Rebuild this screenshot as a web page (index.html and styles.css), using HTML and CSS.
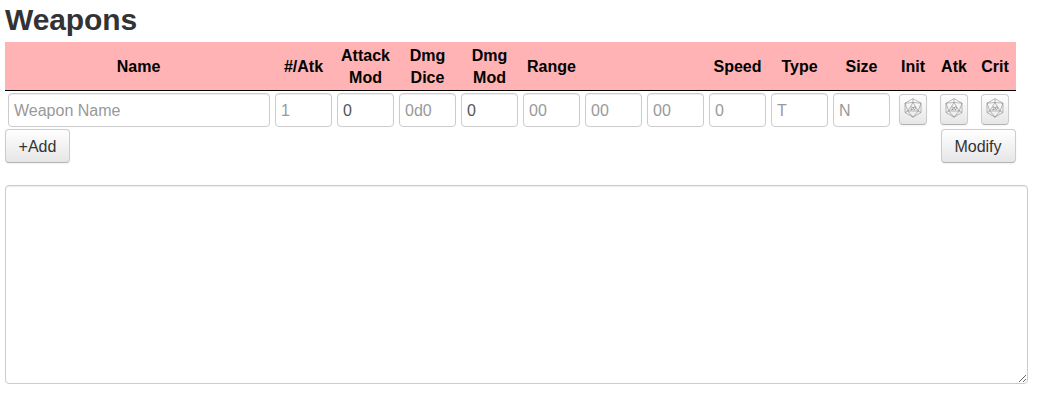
FILE: index.html
```html
<!DOCTYPE html>
<html lang="en">
<head>
<meta charset="utf-8">
<title>Weapons</title>
<link rel="stylesheet" href="styles.css">
</head>
<body>
<svg class="sprite" aria-hidden="true">
  <symbol id="d20" viewBox="0 0 18 20">
    <path d="M9 .7 17 5.200v9.300L9 19.200 1 14.500V5.200zM9 .7v3.800M1 5.200l8-.7 8 .7M9 4.500 3.800 13h10.400zM1 5.200 3.800 13 1 14.500M17 5.200 14.200 13l2.800 1.500M3.800 13 9 19.200l5.200-6.200"/>
    <path class="pips" d="M6.700 9.600c.4-1.200 2-.8 1.800.2-.1.700-1.200 1-1.900 1.800h2"/>
    <ellipse class="pips" cx="10.400" cy="10.200" rx="1" ry="1.400"/>
  </symbol>
</svg>
<main class="weapons">
  <h2 class="title">Weapons</h2>
  <div class="row head">
    <span>Name</span><span>#/Atk</span><span>Attack Mod</span><span>Dmg Dice</span><span>Dmg Mod</span><span>Range</span><span></span><span></span><span>Speed</span><span>Type</span><span>Size</span><span>Init</span><span>Atk</span><span>Crit</span>
  </div>
  <div class="row fields">
    <input class="field name" placeholder="Weapon Name">
    <input class="field" placeholder="1">
    <input class="field" value="0">
    <input class="field" placeholder="0d0">
    <input class="field" value="0">
    <input class="field" placeholder="00">
    <input class="field" placeholder="00">
    <input class="field" placeholder="00">
    <input class="field" placeholder="0">
    <input class="field" placeholder="T">
    <input class="field" placeholder="N">
    <button class="btn roll" aria-label="Roll initiative"><svg class="die"><use href="#d20"/></svg></button>
    <button class="btn roll" aria-label="Roll attack"><svg class="die"><use href="#d20"/></svg></button>
    <button class="btn roll" aria-label="Roll critical"><svg class="die"><use href="#d20"/></svg></button>
  </div>
  <div class="actions">
    <button class="btn add">+Add</button>
    <button class="btn modify">Modify</button>
  </div>
  <textarea class="notes"></textarea>
</main>
</body>
</html>
```
FILE: styles.css
```css
* { box-sizing: border-box; }
body {
  margin: 0;
  background: #fff;
  color: #333;
  font: 16px/22px "Liberation Sans", Arial, sans-serif;
}
.sprite { display: none; }
.weapons { padding-left: 5px; }
.title {
  margin: 0;
  height: 42px;
  font-size: 30px;
  line-height: 40px;
  letter-spacing: -.1px;
}
.row {
  display: grid;
  grid-template-columns: 268px repeat(10, 62px) repeat(3, 41px);
  width: 1011px;
}
.head {
  height: 49px;
  padding-top: 2px;
  align-items: center;
  background: #ffb3b5;
  border-bottom: 1px solid #000;
  color: #000;
  font-weight: bold;
  text-align: center;
}
.head span { padding: 0 5px 0 4px; }
.fields {
  height: 38px;
  padding-top: 2px;
}
.field {
  width: 57px;
  height: 34px;
  margin-left: 2px;
  padding: 6px 5px 4px;
  border: 1px solid #ccc;
  border-radius: 4px;
  background: #fff;
  box-shadow: inset 0 1px 1px rgba(0, 0, 0, .075);
  color: #555;
  font: inherit;
}
.field.name {
  width: 262px;
  margin-left: 3px;
}
.field::placeholder { color: #999; opacity: 1; }
.btn {
  height: 34px;
  padding: 2px 0 0;
  border: 1px solid #ccc;
  border-bottom-color: #b3b3b3;
  border-radius: 4px;
  background: linear-gradient(#fff, #e6e6e6);
  box-shadow: inset 0 1px 0 rgba(255, 255, 255, .2), 0 1px 2px rgba(0, 0, 0, .05);
  color: #333;
  font: inherit;
}
.roll {
  display: flex;
  align-items: flex-start;
  justify-content: center;
  width: 28px;
  height: 31px;
  margin: 1px 0 0 6px;
  padding-top: 3px;
}
.die {
  width: 18px;
  height: 20px;
  fill: none;
  stroke: #777;
  stroke-width: .5;
}
.pips { stroke: #555; stroke-width: .5; }
.actions {
  display: flex;
  justify-content: space-between;
  width: 1011px;
  height: 56px;
}
.add { width: 65px; }
.modify { width: 75px; padding-right: 1px; }
.notes {
  display: block;
  width: 1023px;
  height: 199px;
  padding: 4px 6px;
  border: 1px solid #ccc;
  border-radius: 4px;
  box-shadow: inset 0 1px 1px rgba(0, 0, 0, .075);
  font: inherit;
}
```
